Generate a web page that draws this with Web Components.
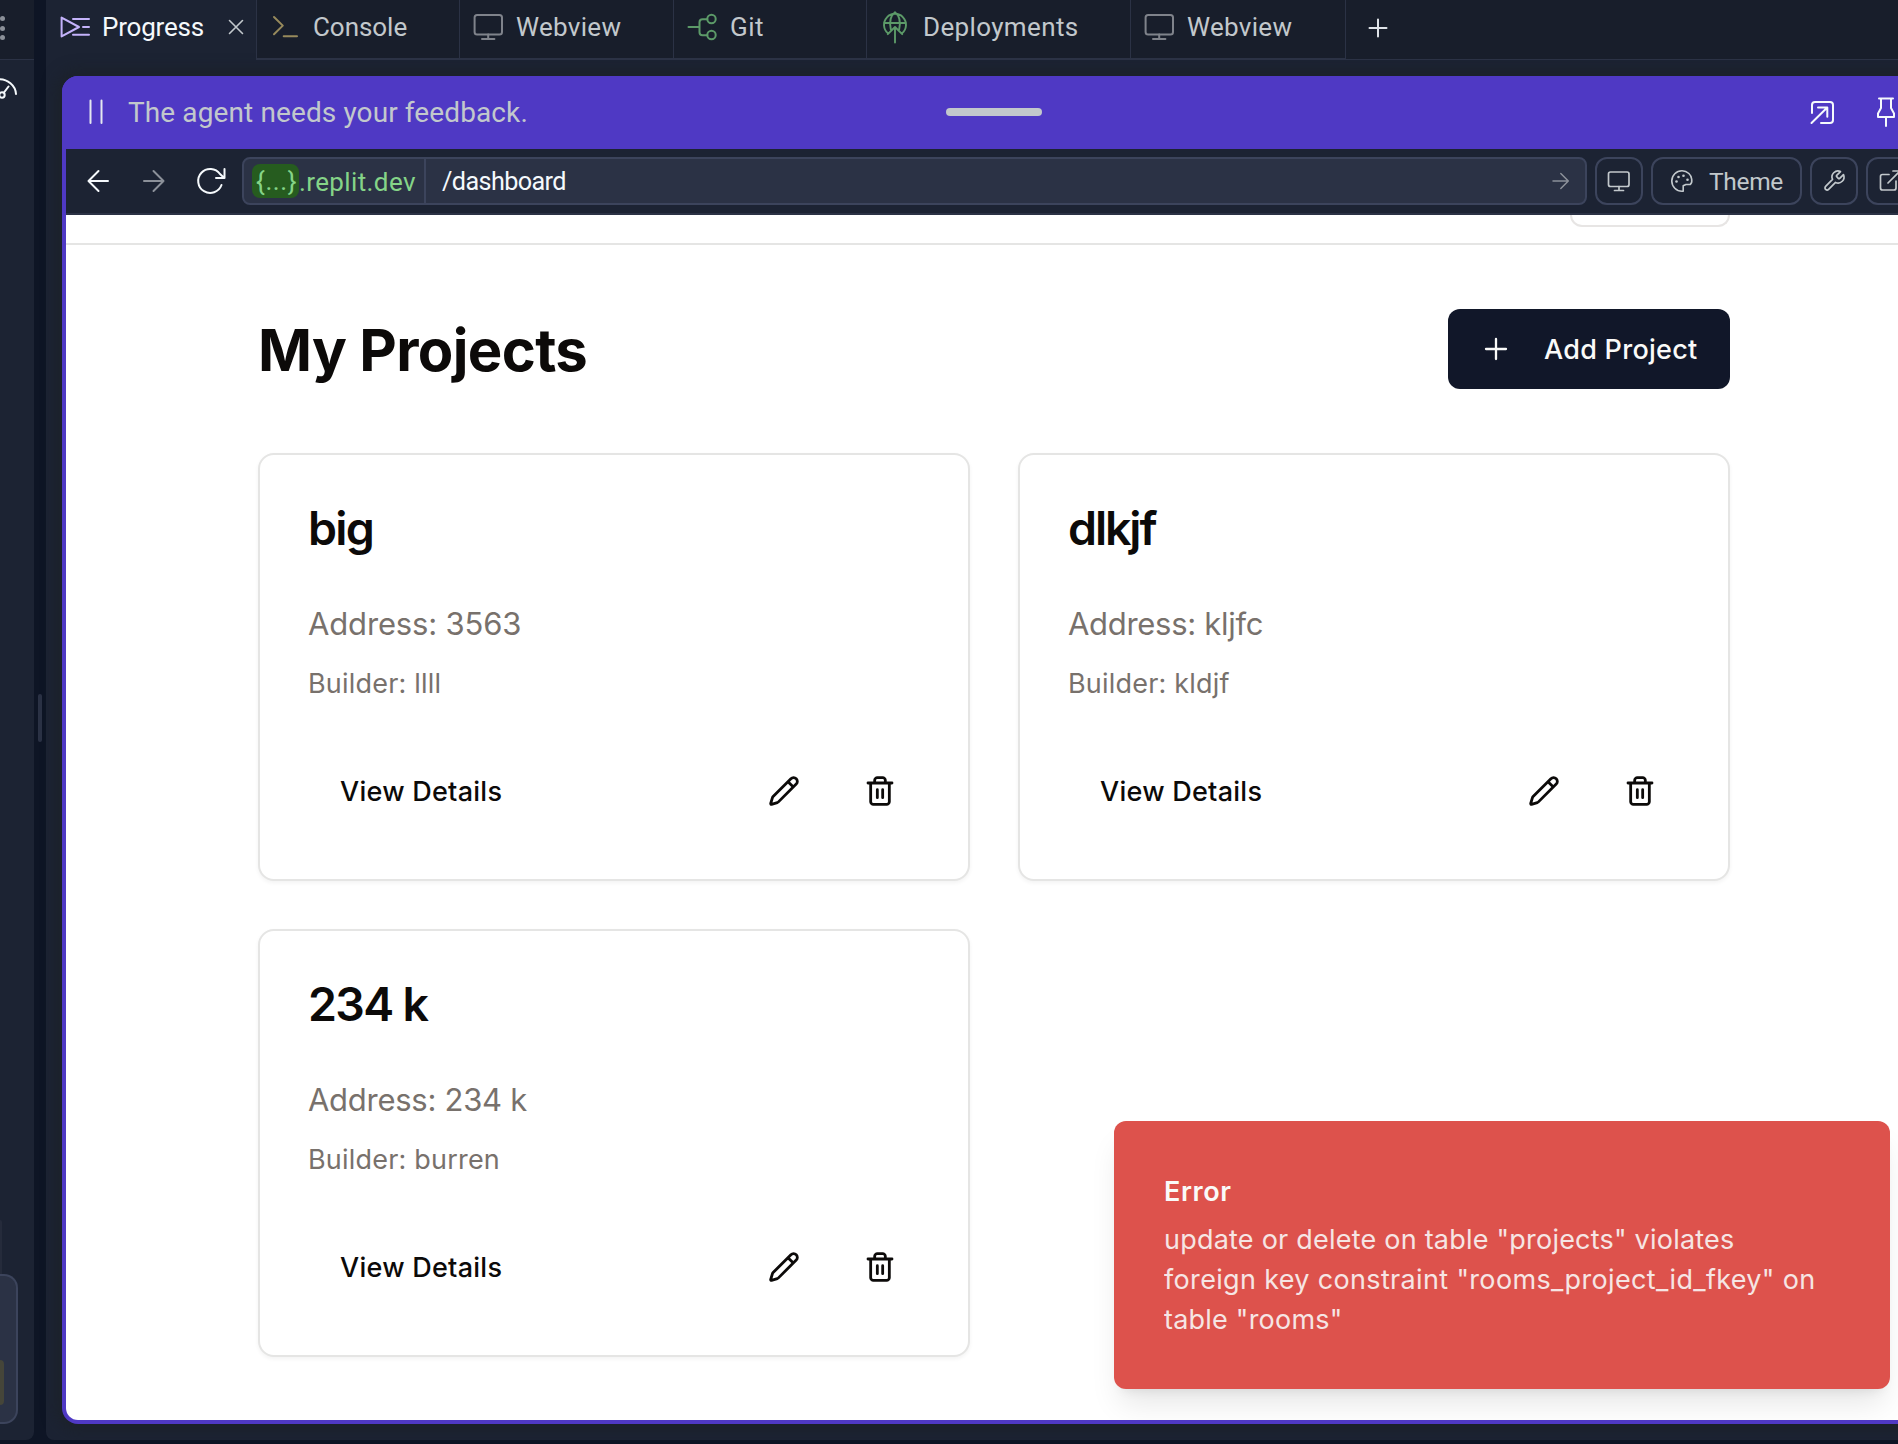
<!DOCTYPE html>
<html lang="en">
<head>
<meta charset="utf-8">
<title>Workspace</title>
<style>
html,body{margin:0;height:100%;overflow:hidden;background:#0e1525}
</style>
</head>
<body>
<work-space></work-space>
<script>
const define = (name, html) => customElements.define(name, class extends HTMLElement {
  constructor() {
    super();
    const t = document.createElement('template');
    t.innerHTML = typeof html === 'function' ? html(this) : html;
    this.attachShadow({ mode: 'open' }).append(t.content.cloneNode(true));
  }
});

const ICONS = {
  progress: [30, 30, 2, '<path d="M1.6 5.6v18.8L19 15z"/><path d="M13 7h16M23 15h6M13 22.8h16"/>'],
  console: [30, 30, 2, '<path d="M3 5l8.8 8.6L3 22.2M12.7 24.3H26"/>'],
  webview: [30, 30, 2, '<rect x="0.6" y="3" width="27.4" height="19.5" rx="2.5"/><path d="M14.2 22.5V27M8 27h12.4"/>'],
  git: [30, 30, 2, '<path d="M0.500 15h11M19.300 7.200h-4.800a3 3 0 0 0-3 3v10a3 3 0 0 0 3 3h4.800"/><circle cx="23.500" cy="7" r="4.200"/><circle cx="23.500" cy="23" r="4.200"/>'],
  deploy: [30, 30, 1.9, '<path d="M7 21.3A11 11 0 1 1 21 21.3M3 11h22M9.8 17.3C8.4 10.5 9.5 3.600 14 .2c4.500 3.400 5.600 10.300 4.200 17.100M14 30.500V15.500M6.800 22.200L14 15l7.200 7.200"/>'],
  close: [14, 14, 1.6, '<path d="M.5.5l13 13M13.500.5l-13 13"/>'],
  plus: [18, 18, 2, '<path d="M9 0.500v17M0.500 9h17"/>'],
  pause: [14, 26, 2, '<path d="M1.500 1.500v22.500M12.500 1.500v22.500"/>'],
  pop: [24, 24, 2, '<path d="M2 13V5a3 3 0 0 1 3-3h15a3 3 0 0 1 3 3v15a3 3 0 0 1-3 3h-9M1.500 23L17 7.800M8 7.500h9.300v9.200"/>'],
  pin: [20, 30, 2, '<path d="M3 1.500h14M5 1.500v9.500L2 16.500v3.500h16v-3.500l-3-5.500V1.500M10 20v9"/>'],
  back: [22, 22, 2, '<path d="M21 11H1.500M11.500 1L1.500 11l10 10"/>'],
  forward: [22, 22, 2, '<path d="M1 11h19.500M10.500 1l10 10-10 10"/>'],
  reload: [30, 30, 2, '<path d="M25.500 19A12 12 0 1 1 24 8l4 3.800M28.500 3v9H20"/>'],
  go: [16, 16, 1.5, '<path d="M0 8h15.300M7.800.5L15.300 8l-7.500 7.500"/>'],
  screen: [24, 22, 1.700, '<rect x="1.500" y="2" width="20.500" height="14.500" rx="2"/><path d="M12 16.500V20.500M7.500 20.500h9"/>'],
  palette: [24, 24, 1.600, '<path d="M12 1.800a10.200 10.200 0 1 0 0 20.400h1.200v-5.400l2.700-1.300h4.300c3-2 1.400-8.600-1.300-11A10.300 10.300 0 0 0 12 1.800z"/><g fill="currentColor" stroke="none"><circle cx="6.500" cy="12.500" r="1.300"/><circle cx="8.500" cy="8" r="1.300"/><circle cx="13.500" cy="6.800" r="1.300"/><circle cx="17.500" cy="10.800" r="1.300"/></g>'],
  wrench: [24, 24, 1.700, '<path d="M14.700 6.300a1 1 0 0 0 0 1.400l1.600 1.600a1 1 0 0 0 1.400 0l3.770-3.770a6 6 0 0 1-7.940 7.940l-6.910 6.910a2.120 2.120 0 0 1-3-3l6.910-6.910a6 6 0 0 1 7.940-7.940l-3.760 3.760z"/>'],
  external: [24, 24, 1.700, '<path d="M11 5.500H4.500a2 2 0 0 0-2 2V19a2 2 0 0 0 2 2H16a2 2 0 0 0 2-2v-7M15 2h7v7M22 2L10 14"/>'],
  gauge: [36, 20, 2, '<path d="M1 15.500a16 14.700 0 0 1 34-1.500M23 12.500l4.500-6"/><circle cx="21" cy="15" r="2.700"/>'],
  add: [32, 32, 2.300, '<path d="M16 6v20M6 16h20"/>'],
  pencil: [24, 24, 2.1, '<path d="M21.174 6.812a1 1 0 0 0-3.986-3.987L3.842 16.174a2 2 0 0 0-.5.830l-1.321 4.352a.5.5 0 0 0 .623.622l4.353-1.320a2 2 0 0 0 .830-.497zM15 5l4 4"/>'],
  trash: [24, 24, 2.1, '<path d="M3 6h18M19 6v14c0 1-1 2-2 2H7c-1 0-2-1-2-2V6M8 6V4c0-1 1-2 2-2h4c1 0 2 1 2 2v2M10 11v6M14 11v6"/>']
};
define('ui-icon', el => {
  const [w, h, s, body] = ICONS[el.getAttribute('name')];
  const size = +el.getAttribute('size') || w;
  return `<style>:host{display:block;flex:none}svg{display:block;overflow:visible}</style>
  <svg width="${size}" height="${size * h / w}" viewBox="0 0 ${w} ${h}" fill="none" stroke="currentColor" stroke-width="${s}" stroke-linecap="round" stroke-linejoin="round">${body}</svg>`;
});

define('pane-tab', `<style>
:host{display:flex;align-items:center;gap:12px;box-sizing:border-box;height:60px;width:var(--w);padding:0 0 4px 14px;flex:none;
 border-left:1px solid #2b3245;border-bottom:2px solid #2b3245;background:#181e2b;color:#c2c8cc;font-size:26px;letter-spacing:var(--ls,.3px);white-space:nowrap}
:host([active]){background:none;border-color:transparent;border-left:0;color:#f5f9fc}
.x{margin:0 13px 0 auto;color:#c2c8cc}
:host(:not([active])) .x{display:none}
</style><slot name="icon"></slot><span><slot></slot></span><ui-icon class="x" name="close"></ui-icon>`);

define('side-pane', `<style>
:host{display:flex;flex-direction:column;width:34px;height:1440px;background:#1c2333;border-radius:0 0 8px 0;overflow:hidden}
header{height:59px;background:#181e2b;border-bottom:1px solid #2b3245;display:flex;align-items:center;flex:none}
.dots{display:flex;flex-direction:column;gap:4.500px;padding-bottom:3px}
i{width:5px;height:5px;border-radius:50%;background:#8b9099;display:block}
.g{color:#f5f9fc;margin:20px 0 0 -19px}
.tab{margin-top:auto;height:54px;width:2px;background:#252b3b;border-radius:0 5px 0 0;flex:none}
.box{box-sizing:border-box;height:150px;width:18px;background:#2b3245;border:2px solid #3c445c;border-left:0;border-radius:0 14px 14px 0;margin-bottom:16px;display:flex;align-items:flex-end;flex:none}
.box b{width:4px;height:45px;margin-bottom:17px;background:#454539;border-radius:0 5px 5px 0}
</style><header><div class="dots"><i></i><i></i><i></i></div></header><ui-icon class="g" name="gauge"></ui-icon><div class="tab"></div><div class="box"><b></b></div>`);

define('tool-button', `<style>
:host{box-sizing:border-box;height:48px;min-width:48px;border:2px solid #3c445c;border-radius:12px;display:flex;align-items:center;justify-content:center;gap:15px;color:#c2c8cc;font-size:24.500px;flex:none;letter-spacing:-.35px}
:host([wide]){width:151px}
</style><slot></slot>`);

define('address-bar', `<style>
:host{box-sizing:border-box;display:flex;align-items:center;height:66px;background:#1c2333;border-bottom:2px solid #2b3245;padding-left:20px;color:#f5f9fc}
.nav{display:flex;align-items:center;width:156px;flex:none}
.field{box-sizing:border-box;width:1345px;height:48px;border:2px solid #3c445c;border-radius:8px;background:#2b3245;display:flex;align-items:center;margin-right:8px;font-size:26px;flex:none}
.host{box-sizing:border-box;display:flex;align-items:center;height:44px;width:182px;padding-left:8px;border-right:2px solid #3c445c;color:#85d488;letter-spacing:.38px;flex:none}
.chip{box-sizing:border-box;background:#265c1f;border-radius:8px;width:47px;height:34px;line-height:35px;padding-left:4px;letter-spacing:.6px}
.d{padding-top:1px}
.path{padding:1px 0 0 16px;letter-spacing:-.6px;font-size:25.200px}
.go{margin:0 16px 0 auto;color:#8b9099}
.tools{display:flex;gap:8px}
</style>
<div class="nav"><ui-icon name="back" style="margin-left:1px"></ui-icon><ui-icon name="forward" style="margin-left:34px;color:#8b9099"></ui-icon><ui-icon name="reload" style="margin-left:31px"></ui-icon></div>
<div class="field"><div class="host"><span class="chip">{...}</span><span class="d">.replit.dev</span></div><span class="path">/dashboard</span><ui-icon class="go" name="go"></ui-icon></div>
<div class="tools"><tool-button><ui-icon name="screen"></ui-icon></tool-button><tool-button wide><ui-icon name="palette"></ui-icon><span>Theme</span></tool-button><tool-button><ui-icon name="wrench"></ui-icon></tool-button><tool-button><ui-icon name="external"></ui-icon></tool-button></div>`);

define('agent-banner', `<style>
:host{box-sizing:border-box;display:flex;align-items:center;height:73px;background:#4f39c4;color:#c2c8cc;font-size:28px;letter-spacing:.11px;padding:0 27px 1px}
.l,.r{flex:1;display:flex;align-items:center}
.l{gap:25px}.r{justify-content:flex-end;gap:42px;color:#f5f9fc}
.r ui-icon:last-child{margin-right:3px}
.grip{width:96px;height:8px;border-radius:4px;background:#c2c8cc}
.pz{color:#e4e8f0}
</style><div class="l"><ui-icon class="pz" name="pause"></ui-icon><span><slot></slot></span></div><div class="grip"></div><div class="r"><ui-icon name="pop"></ui-icon><ui-icon name="pin"></ui-icon></div>`);

define('project-card', `<style>
:host{box-sizing:border-box;display:flex;flex-direction:column;height:428px;border:2px solid #e5e5e4;border-radius:16px;padding:48px;background:#fff;box-shadow:0 2px 4px rgba(0,0,0,.05)}
h3{margin:0 0 48px;font-size:46.500px;line-height:50px;height:48px;font-weight:600;color:#0c0a09;letter-spacing:var(--ls)}
.a{font-size:31px;line-height:50px;height:48px;letter-spacing:var(--la,-.3px);color:#78716c}
.b{margin-top:16px;font-size:27px;line-height:42px;height:40px;letter-spacing:.2px;color:#78716c}
footer{margin-top:48px;height:80px;display:flex;align-items:center;color:#0c0a09;font-size:27px;font-weight:500;letter-spacing:.26px}
.v{margin:0 auto 0 32px}
.ib{width:80px;display:flex;justify-content:center}
.ib + .ib{margin-left:16px}
</style><h3><slot name="title"></slot></h3><div class="a"><slot name="address"></slot></div><div class="b"><slot name="builder"></slot></div>
<footer><span class="v">View Details</span><div class="ib"><ui-icon name="pencil" size="32"></ui-icon></div><div class="ib"><ui-icon name="trash" size="32"></ui-icon></div></footer>`);

define('error-toast', `<style>
:host{box-sizing:border-box;position:absolute;right:32px;bottom:31px;width:776px;height:268px;padding:51px 50px 49px;border-radius:12px;background:#dd524c;color:#fafaf9;font-size:27px;line-height:40px;white-space:nowrap;
 box-shadow:0 20px 30px -6px rgba(0,0,0,.1),0 8px 12px -8px rgba(0,0,0,.1)}
b{display:block;font-weight:600;letter-spacing:.6px;margin-bottom:8px}
div{opacity:.88;letter-spacing:.34px}
</style><b><slot name="title"></slot></b><div><slot></slot></div>`);

define('projects-page', `<style>
:host{display:flex;flex-direction:column;height:1205px;background:#fff;position:relative;font-family:Inter,"Liberation Sans",sans-serif;border-radius:0 0 12px 12px;overflow:hidden}
nav{box-sizing:border-box;height:30px;border-bottom:2px solid #e5e5e4;padding:0 192px;display:flex;justify-content:flex-end;align-items:flex-start;flex:none}
.out{box-sizing:border-box;width:160px;height:12px;border:2px solid #e7e5e4;border-top:0;border-radius:0 0 12px 12px}
main{padding:64px 192px 0}
.head{display:flex;justify-content:space-between;align-items:center;height:80px;margin-bottom:64px}
h1{margin:2px 0 0;font-size:58px;font-weight:700;letter-spacing:-.65px;color:#0c0a09;line-height:72px}
.add{box-sizing:border-box;width:282px;height:80px;border-radius:12px;background:#111729;color:#fafaf9;display:flex;align-items:center;padding-left:32px;font-size:27px;font-weight:500;letter-spacing:.27px}
.add span{margin-left:32px}
.grid{display:grid;grid-template-columns:712px 712px;gap:48px}
.tight{letter-spacing:.22px}
</style>
<nav><div class="out"></div></nav>
<main><div class="head"><h1>My Projects</h1><div class="add"><ui-icon name="add"></ui-icon><span>Add Project</span></div></div>
<div class="grid">
<project-card style="--ls:-1.700px;--la:-.15px"><span slot="title">big</span><span slot="address">Address: 3563</span><span slot="builder">Builder: llll</span></project-card>
<project-card style="--ls:-2.100px"><span slot="title">dlkjf</span><span slot="address">Address: kljfc</span><span slot="builder">Builder: kldjf</span></project-card>
<project-card style="--ls:-1.700px;--la:-.27px"><span slot="title">234 k</span><span slot="address">Address: 234 k</span><span slot="builder">Builder: burren</span></project-card>
</div></main>
<error-toast><span slot="title">Error</span><span class="tight">update or delete on table "projects" violates</span><br>foreign key constraint "rooms_project_id_fkey" on<br><span class="tight">table "rooms"</span></error-toast>`);

define('work-space', `<style>
:host{display:flex;width:1942px;height:1444px;font-family:Roboto,"Noto Sans",sans-serif;background:#0e1525}
.gap{width:12px;display:flex;justify-content:center;padding-top:694px;box-sizing:border-box;flex:none}
.gap i{width:4px;height:48px;border-radius:2px;background:#2b3245}
side-pane{flex:none}
.pane{width:1896px;height:1440px;background:#1c2333;border-radius:0 0 8px 8px;flex:none}
.tabs{display:flex;height:60px}
.rest{flex:1;box-sizing:border-box;height:60px;background:#181e2b;border-left:1px solid #2b3245;border-bottom:1px solid #2b3245;padding:19px 0 0 23px;color:#dfe3e8}
.frame{box-sizing:border-box;margin:16px 16px 0;height:1348px;border-radius:16px;background:#4f39c4;overflow:hidden;box-shadow:0 0 16px 4px rgba(28,32,38,.8)}
.in{margin:0 4px}
</style>
<side-pane></side-pane><div class="gap"><i></i></div>
<section class="pane">
<div class="tabs">
<pane-tab active style="--w:210px;--ls:-.2px"><ui-icon slot="icon" name="progress" style="color:#c4b3fb"></ui-icon>Progress</pane-tab>
<pane-tab style="--w:203px;--ls:-.05px"><ui-icon slot="icon" name="console" style="color:#978a5c"></ui-icon>Console</pane-tab>
<pane-tab style="--w:214px"><ui-icon slot="icon" name="webview" style="color:#7f838b"></ui-icon>Webview</pane-tab>
<pane-tab style="--w:193px;--ls:.5px"><ui-icon slot="icon" name="git" style="color:#5c9a68"></ui-icon>Git</pane-tab>
<pane-tab style="--w:264px;--ls:.36px"><ui-icon slot="icon" name="deploy" style="color:#5c9a68"></ui-icon>Deployments</pane-tab>
<pane-tab style="--w:215px"><ui-icon slot="icon" name="webview" style="color:#7f838b"></ui-icon>Webview</pane-tab>
<div class="rest"><ui-icon name="plus"></ui-icon></div>
</div>
<div class="frame"><agent-banner>The agent needs your feedback.</agent-banner><div class="in"><address-bar></address-bar><projects-page></projects-page></div></div>
</section>`);
</script>
</body>
</html>
